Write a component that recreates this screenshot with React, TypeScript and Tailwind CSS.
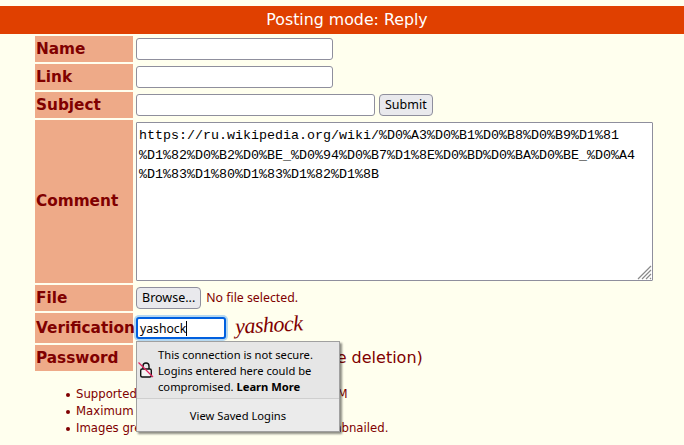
const labelCell =
  "bg-[#EEAA88] text-[#800000] font-bold text-[15.3px] pl-px flex items-center font-['DejaVu_Sans',sans-serif]";
const textInput =
  "block h-[22px] bg-white border border-[#8f8f9d] rounded-[3px] outline-none";
const nativeBtn =
  "h-[22px] px-[5px] bg-[#e9e9ed] border border-[#8f8f9d] rounded-[4px] text-[12.5px] text-black font-['Noto_Sans',sans-serif]";

const notes = [
  "Supported file types are: GIF, JPG, PNG, WEBM",
  "Maximum file size allowed is 4096 KB.",
  "Images greater than 1000x1000 will be thumbnailed.",
];

function Row({ label, h, children }: { label: string; h: string; children?: React.ReactNode }) {
  return (
    <div className={`flex gap-[2px] ${h}`}>
      <div className={`${labelCell} w-[98px] shrink-0 whitespace-nowrap`}>{label}</div>
      <div className="relative flex items-center gap-[3px] pl-px">{children}</div>
    </div>
  );
}

export default function App() {
  return (
    <div className="relative min-h-[445px] overflow-hidden bg-[#FFFFEE] pt-[6px] text-[#800000] font-['DejaVu_Sans',sans-serif]">
      {/* Barre du mode */}
      <div className="h-[28px] pl-[10px] bg-[#E04000] text-white text-[15.8px] leading-[28px] text-center">
        Posting mode: Reply
      </div>

      <div className="ml-[35px] mt-[2px] flex flex-col gap-[2px]">
        <Row label="Name" h="h-[26px]">
          <input className={`${textInput} w-[197px]`} />
        </Row>
        <Row label="Link" h="h-[26px]">
          <input className={`${textInput} w-[197px]`} />
        </Row>
        <Row label="Subject" h="h-[26px]">
          <input className={`${textInput} w-[239px] mr-px`} />
          <button className={nativeBtn}>Submit</button>
        </Row>
        <Row label="Comment" h="h-[163px]">
          <textarea
            readOnly
            spellCheck={false}
            className="block w-[517px] h-[159px] bg-white border border-[#8f8f9d] rounded-[1px] px-[2px] pt-[3px] text-[13.33px] leading-[19.5px] text-black font-['Liberation_Mono',monospace] outline-none resize-none whitespace-pre overflow-hidden"
            value={"https://ru.wikipedia.org/wiki/%D0%A3%D0%B1%D0%B8%D0%B9%D1%81\n%D1%82%D0%B2%D0%BE_%D0%94%D0%B7%D1%8E%D0%BD%D0%BA%D0%BE_%D0%A4\n%D1%83%D1%80%D1%83%D1%82%D1%8B"}
          />
          {/* Poignée de redimensionnement */}
          <svg width="15" height="15" viewBox="0 0 15 15" className="absolute right-px bottom-[3px]" stroke="#8a8a8a" strokeWidth="1.2">
            <path d="M1 14L14 1M5 14L14 5M9 14L14 9M13 14L14 13" />
          </svg>
        </Row>
        <Row label="File" h="h-[26px]">
          <button className={nativeBtn}>Browse...</button>
          <span className="ml-[2px] text-[12.3px] font-['Noto_Sans',sans-serif]">No file selected.</span>
        </Row>
        <Row label="Verification" h="h-[30px]">
          <div className="h-[22px] w-[90px] border-2 border-[#0060df] rounded-[3px] bg-white text-black text-[12.2px] leading-[19px] pl-[2px] shadow-[0_0_0_2px_#b5d8f0] font-['Noto_Sans',sans-serif]">
            yashock<span className="inline-block w-px h-[15px] bg-black align-[-3px]"></span>
          </div>
          <span className="ml-[6px] -mt-[6px] -rotate-3 text-[22px] leading-[22px] tracking-[-0.5px] italic font-['Liberation_Serif',serif]">
            yashock
          </span>
        </Row>
        <Row label="Password" h="h-[26px]">
          <input className={`${textInput} w-[75px]`} />
          <span className="text-[16px] whitespace-nowrap">(for post and file deletion)</span>
        </Row>
      </div>

      <ul className="ml-[66px] mt-[15px] text-[11.7px] leading-[17px]">
        {notes.map((note) => (
          <li key={note} className="flex items-center gap-[6px] whitespace-nowrap">
            <span className="w-[4px] h-[4px] rounded-full bg-[#800000] shrink-0"></span>
            {note}
          </li>
        ))}
      </ul>

      {/* Popup Firefox des identifiants */}
      <div className="absolute left-[136px] top-[341px] w-[204px] h-[91px] bg-[#e6e6e6] border border-[#a0a0a0] shadow-[2px_2px_2px_rgba(0,0,0,0.45)] text-black text-[11.2px] font-['Noto_Sans',sans-serif]">
        <div className="flex h-[57px] border-b border-[#cfcfcf]">
          <div className="w-[18px] shrink-0 pl-px pt-[19px]">
            <svg width="16" height="17" viewBox="0 0 16 17" fill="none">
              <path d="M5 8V5a3 3 0 0 1 6 0v3" stroke="#111" strokeWidth="1.4" />
              <rect x="2.7" y="8" width="10.6" height="8" rx="1.5" stroke="#111" strokeWidth="1.4" fill="#f4f4f4" />
              <path d="M0.5 1.5L15 16" stroke="#e0245e" strokeWidth="1.3" />
            </svg>
          </div>
          <div className="pl-[3px] pt-[5px] leading-[16px] whitespace-nowrap">
            <div>This connection is not secure.</div>
            <div>Logins entered here could be</div>
            <div>
              compromised. <span className="font-bold">Learn More</span>
            </div>
          </div>
        </div>
        <div className="h-[32px] pt-[3px] flex items-center justify-center bg-[#ebebeb]">View Saved Logins</div>
      </div>
    </div>
  );
}
